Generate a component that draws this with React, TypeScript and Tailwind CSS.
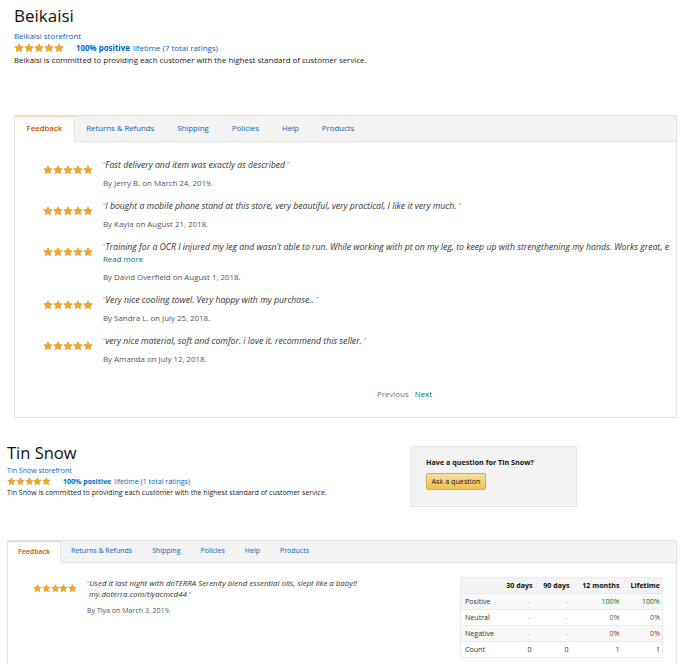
import React from "react";

const Star = ({ s }: { s: number }) => (
  <svg width={s} height={s} viewBox="0 0 24 24">
    <path
      d="M12 1.8l3.05 6.6 7.2.8-5.4 4.9 1.5 7.1L12 17.6l-6.35 3.6 1.5-7.1-5.4-4.9 7.2-.8z"
      fill="#f5a623"
      stroke="#d08a10"
      strokeWidth="1.2"
      strokeLinejoin="round"
    />
  </svg>
);

const Stars = ({ s }: { s: number }) => (
  <div className="flex shrink-0">
    <Star s={s} />
    <Star s={s} />
    <Star s={s} />
    <Star s={s} />
    <Star s={s} />
  </div>
);

const Q = ({ c }: { c: string }) => (
  <span className="text-[#8a8a8a] text-[6.5px] align-top not-italic">{c}</span>
);

const reviews1 = [
  { t: "Fast delivery and item was exactly as described", by: "By Jerry B. on March 24, 2019." },
  {
    t: "I bought a mobile phone stand at this store, very beautiful, very practical, I like it very much.",
    by: "By Kayla on August 21, 2018.",
  },
  {
    t: "Training for a OCR I injured my leg and wasn't able to run. While working with pt on my leg, to keep up with strengthening my hands. Works great, e",
    by: "By David Overfield on August 1, 2018.",
    more: true,
  },
  { t: "Very nice cooling towel. Very happy with my purchase..", by: "By Sandra L. on July 25, 2018." },
  {
    t: "very nice material, soft and comfor. i love it. recommend this seller.",
    by: "By Amanda on July 12, 2018.",
  },
];

const tabs = ["Returns & Refunds", "Shipping", "Policies", "Help", "Products"];

export default function App() {
  return (
    <div className="w-[697px] h-[664px] overflow-hidden bg-white font-['Open_Sans',sans-serif] text-[#111]">
      {/* Section 1 */}
      <div className="pl-[14px] pt-[5px]">
        <div className="text-[17px] leading-[22px] text-[#111]">Beikaisi</div>
        <div className="mt-[3px] text-[7.9px] leading-[12px] text-[#0066c0]">Beikaisi storefront</div>
        <div className="flex items-center h-[12px] text-[7.9px] leading-[12px]">
          <Stars s={10} />
          <span className="ml-[12px] text-[#0066c0] font-bold">100% positive</span>
          <span className="ml-[3px] text-[#0066c0]">lifetime (7 total ratings)</span>
        </div>
        <div className="text-[7.9px] leading-[12px] text-[#222]">
          Beikaisi is committed to providing each customer with the highest standard of customer service.
        </div>
      </div>

      <div className="ml-[14px] mt-[49px] w-[663px] border border-[#e4e4e4] overflow-hidden">
        <div className="flex h-[26px] bg-[#f3f3f3] border-b border-[#e4e4e4] text-[7.8px]">
          <div className="flex items-center px-[11.5px] bg-white border-r border-[#e4e4e4] -mb-px shadow-[inset_0_1px_0_#ead3ad] text-[#c45500] font-semibold">
            Feedback
          </div>
          {tabs.map((t) => (
            <div key={t} className="flex items-center px-[11.5px] text-[#0066c0]">
              {t}
            </div>
          ))}
        </div>
        <div className="pl-[28px] pt-[17px] pb-[17px]">
          {reviews1.map((r, i) => (
            <div key={i} className={`flex ${i < reviews1.length - 1 ? "mb-[11px]" : ""}`}>
              <div className="mt-[6px] w-[50px]">
                <Stars s={10} />
              </div>
              <div className="ml-[10px] min-w-0">
                <div className="whitespace-nowrap italic text-[8.7px] leading-[12px] text-[#333]">
                  <Q c="“" />
                  {r.t}
                  {!r.more && (
                    <>
                      {" "}
                      <Q c="”" />
                    </>
                  )}
                </div>
                {r.more && <div className="text-[7.9px] leading-[12px] text-[#007185]">Read more</div>}
                <div className="mt-[6px] text-[7.9px] leading-[12px] text-[#555]">{r.by}</div>
              </div>
            </div>
          ))}
          <div className="mt-[23px] ml-[334px] flex gap-[6px] text-[7.9px] leading-[12px]">
            <span className="text-[#767676]">Previous</span>
            <span className="text-[#007185]">Next</span>
          </div>
        </div>
      </div>

      {/* Section 2 */}
      <div className="mt-[24px] pl-[7px] flex items-start">
        <div className="w-[403px]">
          <div className="text-[16.5px] leading-[22px] text-[#111]">Tin Snow</div>
          <div className="mt-[1px] text-[7.05px] leading-[11px] text-[#0066c0]">Tin Snow storefront</div>
          <div className="flex items-center h-[11px] text-[7.05px] leading-[11px]">
            <Stars s={8.8} />
            <span className="ml-[12px] text-[#0066c0] font-bold">100% positive</span>
            <span className="ml-[3px] text-[#0066c0]">lifetime (1 total ratings)</span>
          </div>
          <div className="text-[7.05px] leading-[11px] text-[#222]">
            Tin Snow is committed to providing each customer with the highest standard of customer service.
          </div>
        </div>
        <div className="mt-[4px] w-[167px] h-[61px] bg-[#f3f3f3] border border-[#e8e8e8] pl-[15px] pt-[10px]">
          <div className="text-[7.2px] leading-[11px] font-bold text-[#111]">Have a question for Tin Snow?</div>
          <div className="mt-[5px] w-[60px] h-[17px] flex items-center justify-center rounded-[2px] border border-[#d6ad4a] bg-gradient-to-b from-[#f7dfa5] to-[#f0c14b] text-[7.2px] text-[#111]">
            Ask a question
          </div>
        </div>
      </div>

      <div className="ml-[7px] mt-[33px] w-[670px] h-[200px] border border-[#e4e4e4]">
        <div className="flex h-[22px] bg-[#f3f3f3] border-b border-[#e4e4e4] text-[7px]">
          <div className="flex items-center px-[10px] bg-white border-r border-[#e4e4e4] -mb-px shadow-[inset_0_1px_0_#ead3ad] text-[#c45500] font-semibold">
            Feedback
          </div>
          {tabs.map((t) => (
            <div key={t} className="flex items-center px-[10px] text-[#0066c0]">
              {t}
            </div>
          ))}
        </div>
        <div className="flex justify-between pl-[25px] pr-[13px] pt-[15px]">
          <div className="flex">
            <div className="mt-[6px] w-[44px]">
              <Stars s={8.8} />
            </div>
            <div className="ml-[10px]">
              <div className="italic text-[7.85px] leading-[11px] text-[#333]">
                <Q c="“" />
                Used it last night with doTERRA Serenity blend essential oils, slept like a baby!!
                <br />
                &nbsp;my.doterra.com/tiyacmcd44 <Q c="”" />
              </div>
              <div className="mt-[5px] text-[7.05px] leading-[11px] text-[#555]">By Tiya on March 3, 2019.</div>
            </div>
          </div>
          <table className="-mt-px w-[203px] border-collapse text-[7.1px] text-[#333] border border-[#ececec]">
            <thead>
              <tr className="h-[16px] bg-[#f3f3f3]">
                <th className="w-[37px]"></th>
                <th className="w-[38px] text-right pr-[3px] font-bold text-[#111]">30 days</th>
                <th className="w-[37px] text-right pr-[3px] font-bold text-[#111]">90 days</th>
                <th className="w-[50px] text-right pr-[3px] font-bold text-[#111]">12 months</th>
                <th className="text-right pr-[2px] font-bold text-[#111]">Lifetime</th>
              </tr>
            </thead>
            <tbody>
              <tr className="h-[16px] bg-[#f8f8f8] border-t border-[#ececec]">
                <td className="pl-[4px]">Positive</td>
                <td className="text-right pr-[5px] text-[#aaa]">-</td>
                <td className="text-right pr-[5px] text-[#aaa]">-</td>
                <td className="text-right pr-[3px] text-[#007600]">100%</td>
                <td className="text-right pr-[2px] text-[#007600]">100%</td>
              </tr>
              <tr className="h-[16px] bg-white border-t border-[#ececec]">
                <td className="pl-[4px]">Neutral</td>
                <td className="text-right pr-[5px] text-[#aaa]">-</td>
                <td className="text-right pr-[5px] text-[#aaa]">-</td>
                <td className="text-right pr-[3px] text-[#555]">0%</td>
                <td className="text-right pr-[2px] text-[#555]">0%</td>
              </tr>
              <tr className="h-[16px] bg-[#f8f8f8] border-t border-[#ececec]">
                <td className="pl-[4px]">Negative</td>
                <td className="text-right pr-[5px] text-[#aaa]">-</td>
                <td className="text-right pr-[5px] text-[#aaa]">-</td>
                <td className="text-right pr-[3px] text-[#b12704]">0%</td>
                <td className="text-right pr-[2px] text-[#b12704]">0%</td>
              </tr>
              <tr className="h-[16px] bg-white border-t border-[#ececec]">
                <td className="pl-[4px]">Count</td>
                <td className="text-right pr-[4px]">0</td>
                <td className="text-right pr-[4px]">0</td>
                <td className="text-right pr-[3px]">1</td>
                <td className="text-right pr-[2px]">1</td>
              </tr>
            </tbody>
          </table>
        </div>
      </div>
    </div>
  );
}
